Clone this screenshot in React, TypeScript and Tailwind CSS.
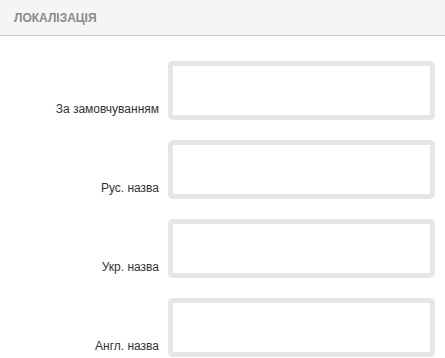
export default function App() {
  const rows = ['За замовчуванням', 'Рус. назва', 'Укр. назва', 'Англ. назва'];

  return (
    <div className="w-[445px] h-[358px] bg-white overflow-hidden font-['Liberation_Sans',Arial,sans-serif]">
      {/* Header */}
      <div className="h-[36px] bg-[#f5f5f5] border-b border-[#cccccc] flex items-center pl-[14px]">
        <span className="text-[12px] font-bold text-[#8a8a8a] uppercase">Локалізація</span>
      </div>

      {/* Fields */}
      <div className="pt-[25px] flex flex-col gap-[20px]">
        {rows.map((label, i) => (
          <div key={i} className="flex items-end">
            <label className="w-[160px] pr-[1px] text-right text-[12px] leading-[14px] text-[#333333] mb-[4px]">
              {label}
            </label>
            <input
              type="text"
              className="ml-[8px] w-[267px] h-[59px] border-[5px] border-[#e6e6e6] rounded-[5px] bg-white outline-none"
            />
          </div>
        ))}
      </div>
    </div>
  );
}
